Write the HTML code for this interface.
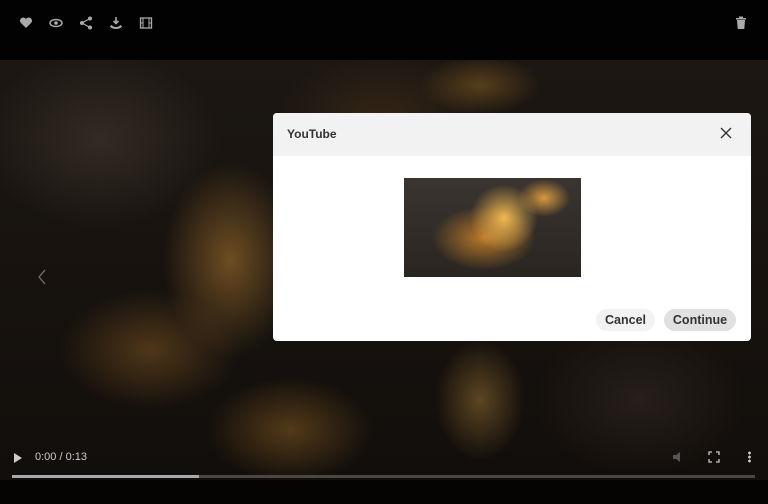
<!DOCTYPE html>
<html><head><meta charset="utf-8"><style>
*{margin:0;padding:0;box-sizing:border-box}
body{width:768px;height:504px;background:#000;overflow:hidden;position:relative;font-family:"Liberation Sans",Arial,sans-serif}
.top{position:absolute;left:0;top:0;width:768px;height:60px;background:#020202}
.vid{position:absolute;left:0;top:60px;width:768px;height:420px;background:
radial-gradient(ellipse 90px 130px at 230px 200px,rgba(180,125,50,.55),transparent 75%),
radial-gradient(ellipse 120px 80px at 150px 290px,rgba(150,100,40,.45),transparent 75%),
radial-gradient(ellipse 110px 70px at 290px 370px,rgba(160,110,40,.45),transparent 75%),
radial-gradient(ellipse 60px 80px at 480px 340px,rgba(180,135,60,.45),transparent 75%),
radial-gradient(ellipse 80px 40px at 480px 25px,rgba(160,110,40,.45),transparent 75%),
radial-gradient(ellipse 160px 120px at 100px 80px,rgba(80,70,60,.45),transparent 75%),
radial-gradient(ellipse 140px 100px at 640px 340px,rgba(60,50,45,.45),transparent 75%),
radial-gradient(ellipse 140px 90px at 380px 60px,rgba(90,60,30,.4),transparent 75%),
linear-gradient(#1c1712,#120e0b)}
.bot{position:absolute;left:0;top:480px;width:768px;height:24px;background:#060403}
.ic{position:absolute;top:16px}
.dlg{position:absolute;left:273px;top:113px;width:478px;height:228px;background:#fff;border-radius:4px;overflow:hidden}
.hd{height:43px;background:#f2f2f2;font-size:12px;font-weight:bold;color:#333;padding:14px 0 0 14px}
.th{position:absolute;left:131px;top:65px;width:177px;height:99px;background:
radial-gradient(ellipse 45px 45px at 100px 40px,#f0b850,transparent 75%),
radial-gradient(ellipse 65px 40px at 80px 60px,#b87828,transparent 80%),
radial-gradient(ellipse 35px 25px at 140px 20px,#d89840,transparent 75%),
linear-gradient(#3a3530,#2a2520)}
.btn{position:absolute;top:196px;height:22px;border-radius:11px;font-size:12.5px;font-weight:bold;color:#333;text-align:center;line-height:22px}
</style></head><body>
<div class="top"></div>
<div class="vid"></div>
<div class="bot"></div>
<svg class="ic" style="left:19px" width="14" height="14" viewBox="0 0 14 14"><path d="M7 12 L1.5 6.5 A3 3 0 0 1 7 3 A3 3 0 0 1 12.5 6.5 Z" fill="#aaa"/></svg>
<svg class="ic" style="left:49px" width="14" height="14" viewBox="0 0 14 14"><ellipse cx="7" cy="7" rx="6" ry="3.5" fill="none" stroke="#aaa" stroke-width="1.5"/><circle cx="7" cy="7" r="1.8" fill="#aaa"/></svg>
<svg class="ic" style="left:79px" width="14" height="14" viewBox="0 0 14 14"><circle cx="11" cy="2.5" r="2" fill="#aaa"/><circle cx="3" cy="7" r="2" fill="#aaa"/><circle cx="11" cy="11.5" r="2" fill="#aaa"/><path d="M11 2.5L3 7L11 11.5" stroke="#aaa" stroke-width="1.2" fill="none"/></svg>
<svg class="ic" style="left:109px" width="14" height="14" viewBox="0 0 14 14"><path d="M7 1v6M4.5 5L7 7.5L9.5 5" stroke="#aaa" stroke-width="1.6" fill="none"/><path d="M1 10a6 3 0 0 0 12 0l-2-1a4 2 0 0 1-8 0z" fill="#aaa"/></svg>
<svg class="ic" style="left:139px" width="14" height="14" viewBox="0 0 14 14"><rect x="1.5" y="2" width="11" height="10" fill="none" stroke="#aaa" stroke-width="1.3"/><path d="M4 2v10M10 2v10M1.5 7h2.5M10 7h2.5" stroke="#aaa" stroke-width="1"/></svg>
<svg class="ic" style="left:735px" width="12" height="14" viewBox="0 0 12 14"><rect x="1" y="2" width="10" height="1.5" fill="#aaa"/><rect x="4" y="0.5" width="4" height="1.5" fill="#aaa"/><path d="M2 4h8l-0.7 9h-6.6z" fill="#aaa"/></svg>
<svg style="position:absolute;left:36px;top:268px" width="12" height="18" viewBox="0 0 12 18"><path d="M9 2L3 9L9 16" stroke="#777" stroke-width="1.2" fill="none"/></svg>
<svg style="position:absolute;left:13px;top:452px" width="10" height="12"><path d="M1 1L9 6L1 11Z" fill="#ccc"/></svg>
<div style="position:absolute;left:35px;top:451px;font-size:11px;color:#ccc">0:00 / 0:13</div>
<svg style="position:absolute;left:672px;top:451px" width="14" height="12"><path d="M1 4h3l4-3v10l-4-3H1z" fill="#555"/></svg>
<svg style="position:absolute;left:708px;top:451px" width="12" height="12"><path d="M1 4V1h3M8 1h3v3M11 8v3H8M4 11H1V8" stroke="#ccc" stroke-width="1.3" fill="none"/></svg>
<div style="position:absolute;left:748px;top:451px;width:3px;height:12px;background:radial-gradient(circle,#ccc 1.3px,transparent 1.5px) 0 0/3px 4px"></div>
<div style="position:absolute;left:12px;top:475px;width:743px;height:3px;background:#4a4745"></div>
<div style="position:absolute;left:12px;top:475px;width:187px;height:3px;background:#aaa"></div>
<div class="dlg">
<div class="hd">YouTube</div>
<svg style="position:absolute;left:447px;top:14px" width="12" height="12"><path d="M1 1L11 11M11 1L1 11" stroke="#333" stroke-width="1.4"/></svg>
<div class="th"></div>
<div class="btn" style="left:323px;width:59px;background:#f2f2f2">Cancel</div>
<div class="btn" style="left:391px;width:72px;background:#e0e0e0">Continue</div>
</div>
</body></html>
